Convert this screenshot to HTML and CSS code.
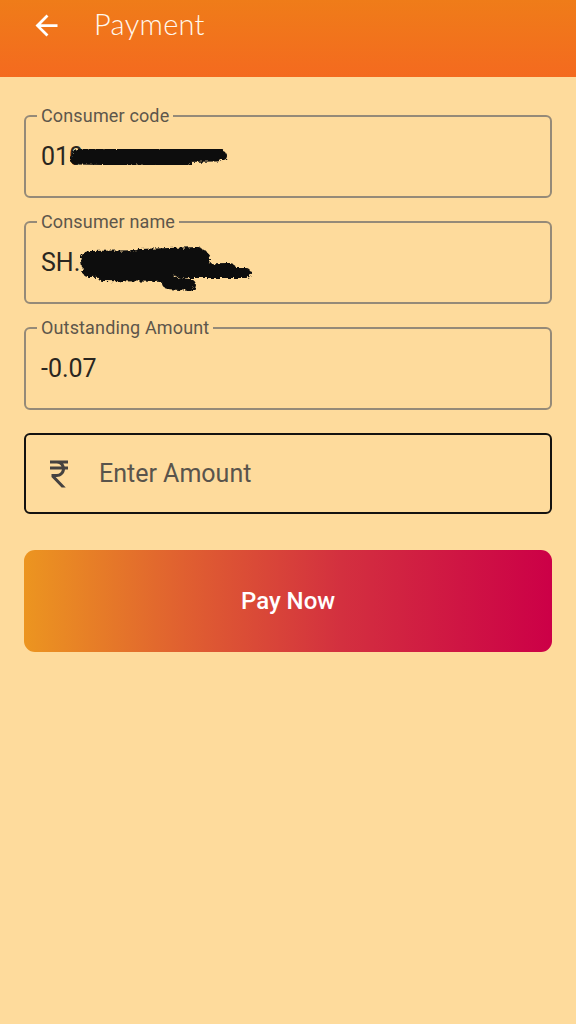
FILE: index.html
```html
<!DOCTYPE html>
<html>
<head>
<meta charset="utf-8">
<link rel="stylesheet" href="styles.css">
</head>
<body>
<svg class="defs" width="0" height="0"><defs><filter id="rough" x="-10%" y="-30%" width="120%" height="160%"><feTurbulence type="fractalNoise" baseFrequency="0.35" numOctaves="2" seed="3"/><feDisplacementMap in="SourceGraphic" scale="5"/></filter></defs></svg>
<header class="appbar">
  <div class="appbar-row">
    <svg class="back" viewBox="0 0 24 24" width="33" height="33"><path fill="#fff" d="M20 11H7.83l5.59-5.59L12 4l-8 8 8 8 1.41-1.41L7.83 13H20v-2z"/></svg>
    <h1 class="title">Payment</h1>
  </div>
</header>
<main class="content">
  <fieldset class="field">
    <legend class="field-label">Consumer code</legend>
    <div class="field-value">010<svg class="scribble s1" viewBox="0 0 164 30" width="164" height="30"><g fill="none" stroke="#111" stroke-linecap="round" filter="url(#rough)"><path d="M12 14 L150 12" stroke-width="15"/><path d="M8 18 L120 20" stroke-width="9"/><path d="M130 10 L156 14" stroke-width="8"/></g></svg></div>
  </fieldset>
  <fieldset class="field">
    <legend class="field-label">Consumer name</legend>
    <div class="field-value">SH.<svg class="scribble s2" viewBox="0 0 176 52" width="176" height="52"><g fill="none" stroke="#111" stroke-linecap="round" filter="url(#rough)"><path d="M10 18 L120 16" stroke-width="20"/><path d="M8 28 L150 26" stroke-width="12"/><path d="M60 10 L118 8" stroke-width="8"/><path d="M100 30 L166 30" stroke-width="10"/><path d="M88 40 L110 42" stroke-width="12"/><path d="M22 34 L90 35" stroke-width="8"/></g></svg></div>
  </fieldset>
  <fieldset class="field">
    <legend class="field-label">Outstanding Amount</legend>
    <div class="field-value">-0.07</div>
  </fieldset>
  <div class="amount-input">
    <svg class="rupee" viewBox="0 0 24 24" width="36" height="36"><path fill="#454240" d="M13.66 7C13.1 5.82 11.9 5 10.5 5L6 5V3h12v2h-3.26c.48.58.84 1.26 1.05 2H18v2h-2.02c-.25 2.8-2.61 5-5.48 5h-.73l6.73 7h-2.77L7 14v-2h3.5c1.76 0 3.22-1.3 3.46-3L6 9V7h7.66z"/></svg>
    <span class="placeholder">Enter Amount</span>
  </div>
  <button class="pay-btn">Pay Now</button>
</main>
</body>
</html>
```
FILE: styles.css
```css
* { box-sizing: border-box; }
html, body { margin: 0; padding: 0; }
body {
  width: 576px;
  min-height: 1024px;
  background: #fedb9c;
  font-family: Roboto, "Noto Sans", Arial, sans-serif;
}
.defs { position: absolute; width: 0; height: 0; }
.appbar {
  height: 77px;
  background: linear-gradient(to bottom, #ef7c19, #f46a1f);
}
.appbar-row {
  height: 48px;
  display: flex;
  align-items: center;
  padding-left: 30px;
}
.back { display: block; flex: none; margin-top: 2px; }
.title {
  margin: 0 0 0 31px;
  font-family: Lato, "Open Sans", sans-serif;
  font-weight: 300;
  font-size: 29px;
  line-height: 34px;
  color: #fff8ee;
  letter-spacing: 0.3px;
}
.content {
  display: flex;
  flex-direction: column;
  padding: 30px 24px 0;
}
.field {
  margin: 0 0 15px;
  padding: 0 15px 25px;
  border: 2px solid #958a78;
  border-radius: 6px;
  min-width: 0;
}
.field-label {
  margin-left: -4px;
  padding: 0 4px;
  font-size: 18px;
  line-height: 18px;
  color: #5d564b;
  letter-spacing: 0.15px;
}
.field-value {
  margin-top: 16px;
  height: 30px;
  display: flex;
  align-items: center;
  font-size: 25px;
  color: #2a2620;
  white-space: nowrap;
}
.scribble { display: block; flex: none; }
.s1 { margin-left: -16px; margin-top: 2px; }
.s2 { margin-left: 0; margin-top: 14px; }
.amount-input {
  margin-top: 8px;
  height: 81px;
  border: 2px solid #141210;
  border-radius: 6px;
  display: flex;
  align-items: center;
  padding-left: 15px;
}
.rupee { display: block; flex: none; }
.placeholder {
  margin-left: 22px;
  font-size: 25px;
  color: #59544c;
}
.pay-btn {
  margin-top: 36px;
  height: 102px;
  border: 0;
  border-radius: 11px;
  background: linear-gradient(to right, #ec9520, #e06030 30%, #d3303f 60%, #cc0047);
  color: #fff;
  font-family: Roboto, Arial, sans-serif;
  font-weight: 500;
  font-size: 24px;
}
```
